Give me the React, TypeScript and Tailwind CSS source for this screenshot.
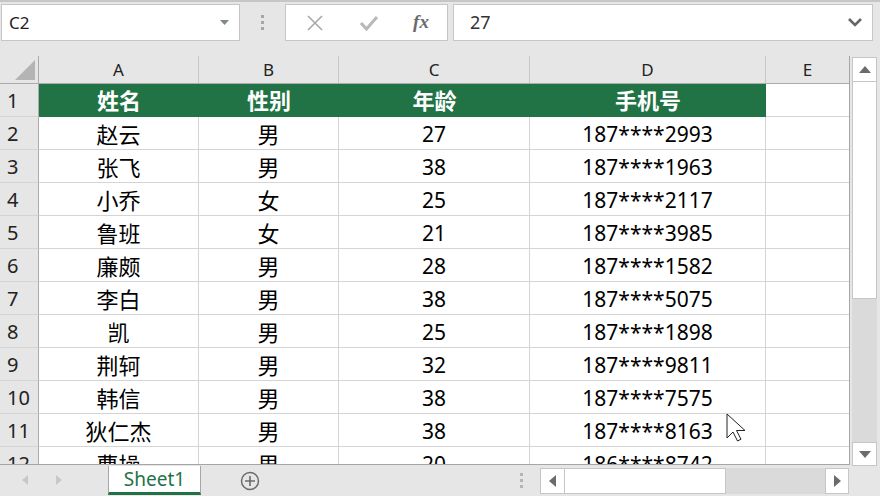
const cols = [
  { key: 'A', w: 'w-[160px]' },
  { key: 'B', w: 'w-[140px]' },
  { key: 'C', w: 'w-[191px]' },
  { key: 'D', w: 'w-[236px]' },
]

const rows = [
  ['赵云', '男', '27', '187****2993'],
  ['张飞', '男', '38', '187****1963'],
  ['小乔', '女', '25', '187****2117'],
  ['鲁班', '女', '21', '187****3985'],
  ['廉颇', '男', '28', '187****1582'],
  ['李白', '男', '38', '187****5075'],
  ['凯', '男', '25', '187****1898'],
  ['荆轲', '男', '32', '187****9811'],
  ['韩信', '男', '38', '187****7575'],
  ['狄仁杰', '男', '38', '187****8163'],
  ['曹操', '男', '20', '186****8742'],
]

const font = { fontFamily: '"Noto Sans", "Noto Sans CJK SC", sans-serif' }

function FormulaBar() {
  return (
    <div className="h-[56px] border-t-2 border-[#c6c6c6] flex items-start pt-[2px] gap-0">
      <div className="ml-[1px] w-[239px] h-[37px] bg-white border border-[#c6c6c6] flex items-center pl-[7px] pr-[10px]">
        <span className="text-[17px] text-[#222] flex-1">C2</span>
        <svg width="9" height="5" viewBox="0 0 9 5"><path d="M0 0h9L4.5 5z" fill="#7c8b86" /></svg>
      </div>
      <div className="w-[45px] h-[37px] flex flex-col items-center justify-center gap-[3px]">
        <div className="w-[3px] h-[3px] bg-[#a6a6a6]" />
        <div className="w-[3px] h-[3px] bg-[#a6a6a6]" />
        <div className="w-[3px] h-[3px] bg-[#a6a6a6]" />
      </div>
      <div className="w-[163px] h-[37px] bg-white border border-[#c6c6c6] flex items-center">
        <div className="w-[55px] flex justify-center pl-[2px]">
          <svg width="16" height="16" viewBox="0 0 16 16"><path d="M1 1l14 14M15 1L1 15" stroke="#a8a8a8" strokeWidth="1.6" /></svg>
        </div>
        <div className="w-[55px] flex justify-center">
          <svg width="20" height="16" viewBox="0 0 20 16"><path d="M2 8l5.5 6L18 2" stroke="#b8b8b8" strokeWidth="3" fill="none" /></svg>
        </div>
        <div className="w-[50px] flex justify-center">
          <span className="text-[19px] italic text-[#6b6b6b] font-bold" style={{ fontFamily: '"Liberation Serif", serif' }}>fx</span>
        </div>
      </div>
      <div className="ml-[5px] w-[420px] h-[37px] bg-white border border-[#c6c6c6] flex items-center pl-[16px] pr-[10px]">
        <span className="text-[18px] text-[#333] flex-1">27</span>
        <svg width="14" height="9" viewBox="0 0 14 9"><path d="M1 1l6 6 6-6" stroke="#666" strokeWidth="2.6" fill="none" /></svg>
      </div>
    </div>
  )
}

function Grid() {
  return (
    <div className="w-[850px] h-[409px] overflow-hidden border-r border-b border-[#a6a6a6] bg-white">
      <div className="flex h-[28px] bg-[#e6e6e6] border-b border-[#ababab]">
        <div className="w-[39px] border-r border-[#ababab] flex items-end justify-end p-[3px]">
          <svg width="20" height="20" viewBox="0 0 20 20"><path d="M20 0v20H0z" fill="#b4b4b4" /></svg>
        </div>
        {cols.map((c) => (
          <div key={c.key} className={`${c.w} border-r border-[#c6c6c6] flex items-end justify-center pb-[1px] text-[17px] text-[#222]`}>{c.key}</div>
        ))}
        <div className="flex-1 flex items-end justify-center pb-[1px] text-[17px] text-[#222]">E</div>
      </div>
      <Row n={1} cells={['姓名', '性别', '年龄', '手机号']} head />
      {rows.map((r, i) => (
        <Row key={i} n={i + 2} cells={r} />
      ))}
    </div>
  )
}

function Row({ n, cells, head }: { n: number; cells: string[]; head?: boolean }) {
  return (
    <div className="flex h-[33px]">
      <div className="w-[39px] bg-[#e6e6e6] border-r border-b border-r-[#ababab] border-b-[#d4d4d4] flex items-end pl-[7px] text-[20px] text-[#222]">{n}</div>
      {cols.map((c, i) => (
        <div
          key={c.key}
          className={
            head
              ? `${c.w} bg-[#217346] border-b border-[#217346] flex items-center justify-center pt-[1px] text-[22px] font-bold text-white`
              : `${c.w} border-r border-b border-[#d4d4d4] flex items-center justify-center pt-[3px] ${i < 2 ? 'text-[22px]' : 'text-[21px]'} text-black`
          }
        >
          {cells[i]}
        </div>
      ))}
      <div className="flex-1 border-b border-[#d4d4d4]" />
    </div>
  )
}

function VScroll() {
  return (
    <div className="ml-[2px] mt-[1px] w-[25px] h-[409px] bg-[#dadada] flex flex-col">
      <div className="h-[25px] bg-white border border-[#c6c6c6] flex items-center justify-center">
        <svg width="12" height="7" viewBox="0 0 12 7"><path d="M0 7L6 0l6 7z" fill="#6b6b6b" /></svg>
      </div>
      <div className="h-[217px] bg-white border-x border-b border-[#c6c6c6]" />
      <div className="flex-1" />
      <div className="h-[24px] bg-white border border-[#c6c6c6] flex items-center justify-center">
        <svg width="12" height="7" viewBox="0 0 12 7"><path d="M0 0h12L6 7z" fill="#6b6b6b" /></svg>
      </div>
    </div>
  )
}

function SheetBar() {
  return (
    <div className="flex-1 flex items-start">
      <div className="w-[108px] h-[28px] flex items-center">
        <svg className="ml-[22px]" width="6" height="10" viewBox="0 0 6 10"><path d="M6 0v10L0 5z" fill="#c8c8c8" /></svg>
        <svg className="ml-[28px]" width="6" height="10" viewBox="0 0 6 10"><path d="M0 0v10l6-5z" fill="#c8c8c8" /></svg>
      </div>
      <div className="w-[93px] h-[29px] bg-white border-x border-[#a6a6a6] border-b-[3px] border-b-[#217346] flex items-center justify-center text-[19px] text-[#217346]">Sheet1</div>
      <div className="w-[98px] h-[29px] flex items-center justify-center">
        <svg width="20" height="20" viewBox="0 0 20 20"><circle cx="10" cy="10" r="8.5" stroke="#6b6b6b" strokeWidth="1.5" fill="none" /><path d="M10 5v10M5 10h10" stroke="#6b6b6b" strokeWidth="1.6" /></svg>
      </div>
      <div className="w-[222px] h-[29px] flex flex-col items-end justify-center gap-[3px] pr-[0px]">
        <div className="w-[3px] h-[3px] bg-[#b4b4b4] mr-[-2px]" />
        <div className="w-[3px] h-[3px] bg-[#b4b4b4] mr-[-2px]" />
        <div className="w-[3px] h-[3px] bg-[#b4b4b4] mr-[-2px]" />
      </div>
      <div className="ml-[19px] mt-[2px] w-[309px] h-[26px] bg-[#dadada] flex">
        <div className="w-[25px] bg-white border border-[#c6c6c6] flex items-center justify-center">
          <svg width="7" height="12" viewBox="0 0 7 12"><path d="M7 0v12L0 6z" fill="#6b6b6b" /></svg>
        </div>
        <div className="w-[161px] bg-white border-y border-r border-[#c6c6c6]" />
        <div className="flex-1" />
        <div className="w-[24px] bg-white border border-[#c6c6c6] flex items-center justify-center">
          <svg width="7" height="12" viewBox="0 0 7 12"><path d="M0 0v12l7-6z" fill="#6b6b6b" /></svg>
        </div>
      </div>
    </div>
  )
}

export default function App() {
  return (
    <div className="relative w-[880px] h-[496px] overflow-hidden bg-[#e6e6e6]" style={font}>
      <FormulaBar />
      <div className="flex items-start">
        <Grid />
        <VScroll />
      </div>
      <SheetBar />
      <svg className="absolute left-[726px] top-[413px]" width="20" height="29" viewBox="0 0 20 29">
        <path d="M1 1v24l6-6 4.5 9 3.5-1.8-4.5-8.7H19z" fill="white" stroke="#222" strokeWidth="1" strokeLinejoin="round" />
      </svg>
    </div>
  )
}
